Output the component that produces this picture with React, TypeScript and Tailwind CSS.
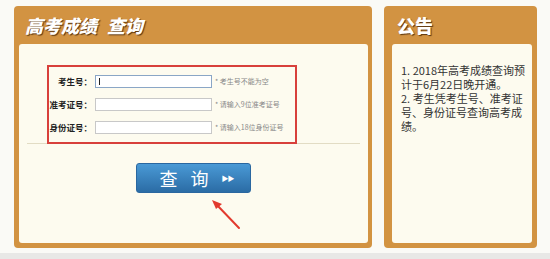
import React, { ReactElement } from "react";

const cjk = "font-['Noto_Sans_CJK_SC','Noto_Sans',sans-serif]";

interface FieldProps {
  label: string;
  hint: string;
  focused?: boolean;
}

function Field({ label, hint, focused }: FieldProps): ReactElement {
  return (
    <div className="flex items-center h-[13px]">
      <div className="w-[43px] text-right text-[8.5px] font-bold text-[#222] leading-none">
        {label}：
      </div>
      <div
        className={
          "ml-[3px] w-[117px] h-[13px] bg-white border " +
          (focused ? "border-[#8aa6c6]" : "border-[#c8c8c8]")
        }
      >
        {focused && <div className="ml-[3px] mt-[2px] w-px h-[7px] bg-[#222]" />}
      </div>
      <div className="ml-[3px] text-[7px] text-[#888] leading-none whitespace-nowrap">
        * {hint}
      </div>
    </div>
  );
}

function App(): ReactElement {
  return (
    <div className={"w-[550px] h-[259px] bg-[#fafaf6] flex flex-col " + cjk}>
      <div className="flex flex-1 pt-[6px] pl-[14px] gap-[12px]">
        {/* 左侧 查询 */}
        <div className="w-[358px] h-[242px] bg-[#d29342] rounded-[4px] flex flex-col px-[5px] pb-[5px] pr-[4px]">
          <div className="h-[38px] flex items-center pl-[6px] gap-[10px] text-white text-[18px] font-black italic [text-shadow:1px_1px_1px_#5a3610]">
            <span>高考成绩</span>
            <span>查询</span>
          </div>
          <div className="relative flex-1 bg-[#fdfbef] rounded-[3px] flex flex-col items-center">
            <div className="self-stretch mx-[8px] mt-[21px] border-b border-[#e2dcc4]">
              <div className="ml-[20px] w-[250px] -mb-px border-2 border-[#d8403b] pt-[8px] pb-[8px] flex flex-col gap-[10px]">
                <Field label="考生号" hint="考生号不能为空" focused />
                <Field label="准考证号" hint="请输入9位准考证号" />
                <Field label="身份证号" hint="请输入18位身份证号" />
              </div>
            </div>
            <button className="mt-[19px] w-[115px] h-[30px] rounded-[3px] bg-gradient-to-b from-[#4a9ad6] to-[#2b6ca5] border border-[#2a67a0] text-white flex items-center justify-center pl-[6px]">
              <span className="text-[18px] leading-none">查</span>
              <span className="text-[18px] leading-none ml-[13px]">询</span>
              <span className="text-[7px] leading-none tracking-[-1px] ml-[13px]">▶▶</span>
            </button>
            <svg className="absolute left-[188px] top-[152px]" width="34" height="34" viewBox="0 0 34 34">
              <line x1="32" y1="32" x2="9" y2="8" stroke="#e23a2e" strokeWidth="2" strokeLinecap="round" />
              <polygon points="5,4 15,8 9,13" fill="#e23a2e" />
            </svg>
          </div>
        </div>

        {/* 右侧 公告 */}
        <div className="w-[153px] h-[242px] bg-[#d29342] rounded-[4px] flex flex-col pl-[8px] pr-[5px] pb-[5px]">
          <div className="h-[38px] flex items-center pl-[5px]">
            <span className="text-white text-[18px] font-black [text-shadow:1px_1px_1px_#5a3610]">公告</span>
          </div>
          <div className="flex-1 bg-[#fdfbef] rounded-[3px] pl-[9px] pr-[6px] pt-[19px]">
            <p className="text-[11px] leading-[14px] text-[#333]">
              1. 2018年高考成绩查询预计于6月22日晚开通。
            </p>
            <p className="text-[11px] leading-[14px] text-[#333]">
              2. 考生凭考生号、准考证号、身份证号查询高考成绩。
            </p>
          </div>
        </div>
      </div>
      <div className="h-[6px] bg-[#e8e8e6]" />
    </div>
  );
}

export default App;
